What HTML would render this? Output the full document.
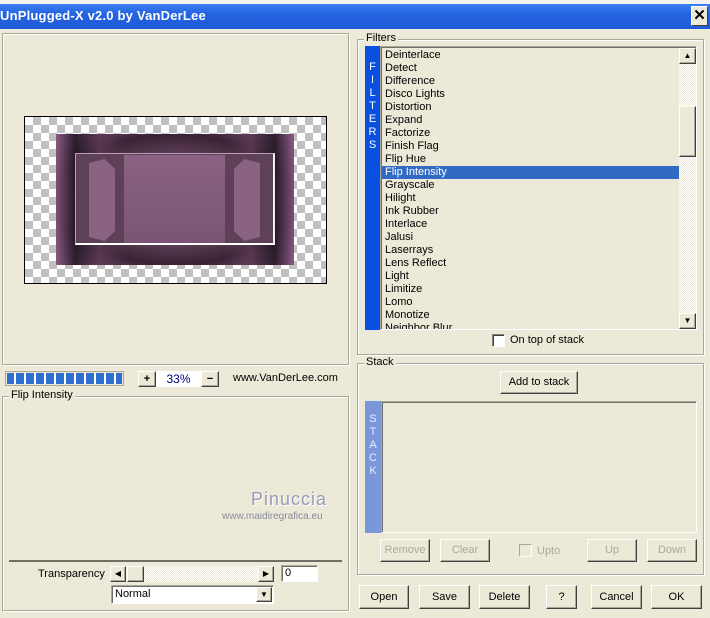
<!DOCTYPE html>
<html><head><style>
*{margin:0;padding:0;box-sizing:border-box}
body{width:710px;height:618px;background:#ece9d8;font-family:"Liberation Sans",sans-serif;font-size:11px;color:#000;position:relative;overflow:hidden}
.a{position:absolute}
.grp{position:absolute;border:1px solid #aca899;box-shadow:inset 1px 1px 0 #fff,1px 1px 0 #fff}
.lbl{position:absolute;background:#ece9d8;padding:0 2px;font-size:11px}
.btn{position:absolute;background:#ece9d8;border:1px solid;border-color:#fff #404040 #404040 #fff;box-shadow:inset -1px -1px 0 #aca899;text-align:center;font-size:11px;line-height:20px}
.dis{color:#aca899}
.sunk{position:absolute;border:1px solid;border-color:#aca899 #fff #fff #aca899;box-shadow:inset 1px 1px 0 #716f64}
.item{height:13px;line-height:13px;padding-left:3px;white-space:nowrap}
.sel{background:#316ac5;color:#fff}
.chk{position:absolute;width:13px;height:13px;background:#fff;border:1px solid;border-color:#808080 #fff #fff #808080;box-shadow:inset 1px 1px 0 #404040}
</style></head><body>
<div class="a" style="left:0;top:0;width:710px;height:4px;background:#f4f3ee"></div>
<div class="a" style="left:0;top:4px;width:710px;height:25px;background:linear-gradient(#3a7ff0,#2563e0 40%,#1f5ad8)"></div>
<div class="a" style="left:0;top:8px;color:#fff;font-weight:bold;font-size:13px;font-family:'Liberation Sans',sans-serif;letter-spacing:0.2px">UnPlugged-X v2.0 by VanDerLee</div>
<div class="a" style="left:691px;top:6px;width:17px;height:20px;background:#ece9d8;border:1px solid;border-color:#fff #404040 #404040 #fff;font-weight:bold;font-size:15px;text-align:center;line-height:18px">✕</div>

<!-- preview -->
<div class="grp" style="left:2px;top:33px;width:347px;height:332px"></div>
<div class="a" style="left:24px;top:116px;width:303px;height:168px;border:1px solid #000;background-color:#fff;background-image:linear-gradient(45deg,#c0c0c0 25%,transparent 25%,transparent 75%,#c0c0c0 75%),linear-gradient(45deg,#c0c0c0 25%,transparent 25%,transparent 75%,#c0c0c0 75%);background-size:16px 16px;background-position:0 0,8px 8px"></div>
<div class="a" style="left:56px;top:134px;width:238px;height:131px;background:radial-gradient(ellipse at center,#7a5670 30%,#3a2234 70%,#8a5a80 100%)"></div>
<div class="a" style="left:56px;top:134px;width:238px;height:131px;background:linear-gradient(90deg,#8e5c86 0%,#1e1420 8%,#5a3a52 18%,transparent 30%,transparent 70%,#5a3a52 82%,#1e1420 92%,#8e5c86 100%);opacity:.8"></div>
<div class="a" style="left:75px;top:153px;width:200px;height:92px;background:#5e4058;border:1px solid #b8a0b4;border-bottom:2px solid #fff;border-right:2px solid #eee"></div>
<div class="a" style="left:124px;top:155px;width:101px;height:88px;background:linear-gradient(#8a6282,#7a5674)"></div>
<div class="a" style="left:89px;top:159px;width:26px;height:82px;background:#8a6282;clip-path:polygon(0 5%,60% 0,100% 12%,100% 88%,60% 100%,0 95%)"></div>
<div class="a" style="left:234px;top:159px;width:26px;height:82px;background:#8a6282;clip-path:polygon(0 12%,40% 0,100% 5%,100% 95%,40% 100%,0 88%)"></div>

<!-- progress / zoom -->
<div class="a" style="left:5px;top:371px;width:119px;height:15px;border:1px solid #aca899;background:repeating-linear-gradient(90deg,#2f6fd0 0 8px,#fff 8px 10px);background-clip:content-box;padding:1px"></div>
<div class="btn" style="left:138px;top:371px;width:18px;height:16px;line-height:14px;font-weight:bold">+</div>
<div class="a" style="left:156px;top:371px;width:45px;height:16px;background:#fff;color:#000080;text-align:center;line-height:16px;font-size:12px">33%</div>
<div class="btn" style="left:201px;top:371px;width:18px;height:16px;line-height:14px;font-weight:bold">−</div>
<div class="a" style="left:233px;top:372px;font-size:11px">www.VanDerLee.com</div>

<!-- Flip Intensity -->
<div class="grp" style="left:2px;top:396px;width:347px;height:215px"></div>
<div class="lbl" style="left:9px;top:389px">Flip Intensity</div>
<div class="a" style="left:251px;top:489px;font-size:18px;color:#9a9ab8;letter-spacing:1px;text-shadow:1px 1px 0 #fff">Pinuccia</div>
<div class="a" style="left:222px;top:511px;font-size:10px;color:#8a8a9a">www.maidiregrafica.eu</div>
<div class="a" style="left:9px;top:560px;width:333px;height:2px;background:#716f64"></div>
<div class="a" style="left:38px;top:568px">Transparency</div>
<div class="a" style="left:110px;top:566px;width:164px;height:16px;background:repeating-conic-gradient(#ece9d8 0 25%,#fff 0 50%) 0 0/2px 2px"></div>
<div class="btn" style="left:110px;top:566px;width:16px;height:16px;font-size:8px;line-height:14px">◀</div>
<div class="btn" style="left:127px;top:566px;width:17px;height:16px"></div>
<div class="btn" style="left:258px;top:566px;width:16px;height:16px;font-size:8px;line-height:14px">▶</div>
<div class="sunk" style="left:281px;top:565px;width:37px;height:17px;background:#fff;padding-left:3px;line-height:15px">0</div>
<div class="sunk" style="left:111px;top:585px;width:163px;height:19px;background:#fff;padding-left:3px;line-height:17px">Normal</div>
<div class="btn" style="left:256px;top:587px;width:16px;height:15px;font-size:8px;line-height:13px">▼</div>

<!-- Filters -->
<div class="grp" style="left:357px;top:39px;width:347px;height:316px"></div>
<div class="lbl" style="left:364px;top:32px">Filters</div>
<div class="a" style="left:365px;top:46px;width:15px;height:284px;background:#0a50e0;color:#fff;font-size:11px;text-align:center;line-height:13px;padding-top:15px">F<br>I<br>L<br>T<br>E<br>R<br>S</div>
<div class="sunk" style="left:380px;top:46px;width:317px;height:284px;box-shadow:inset 1px 1px 0 #716f64"></div>
<div class="a" style="left:382px;top:48px;width:297px;height:281px;overflow:hidden;font-size:11px;padding-top:1px">
<div class="item">Deinterlace</div><div class="item">Detect</div><div class="item">Difference</div><div class="item">Disco Lights</div><div class="item">Distortion</div><div class="item">Expand</div><div class="item">Factorize</div><div class="item">Finish Flag</div><div class="item">Flip Hue</div><div class="item sel">Flip Intensity</div><div class="item">Grayscale</div><div class="item">Hilight</div><div class="item">Ink Rubber</div><div class="item">Interlace</div><div class="item">Jalusi</div><div class="item">Laserrays</div><div class="item">Lens Reflect</div><div class="item">Light</div><div class="item">Limitize</div><div class="item">Lomo</div><div class="item">Monotize</div><div class="item">Neighbor Blur</div></div>
<div class="a" style="left:679px;top:48px;width:17px;height:281px;background:repeating-conic-gradient(#ece9d8 0 25%,#fff 0 50%) 0 0/2px 2px"></div>
<div class="btn" style="left:679px;top:48px;width:17px;height:16px;font-size:8px;line-height:14px">▲</div>
<div class="btn" style="left:679px;top:106px;width:17px;height:51px"></div>
<div class="btn" style="left:679px;top:313px;width:17px;height:16px;font-size:8px;line-height:14px">▼</div>
<div class="chk" style="left:492px;top:334px"></div>
<div class="a" style="left:510px;top:334px">On top of stack</div>

<!-- Stack -->
<div class="grp" style="left:357px;top:363px;width:347px;height:212px"></div>
<div class="lbl" style="left:364px;top:356px">Stack</div>
<div class="btn" style="left:500px;top:371px;width:78px;height:23px">Add to stack</div>
<div class="a" style="left:365px;top:401px;width:16px;height:132px;background:#7b97dc;color:#e8ecff;font-size:11px;text-align:center;line-height:13px;padding-top:12px">S<br>T<br>A<br>C<br>K</div>
<div class="sunk" style="left:381px;top:401px;width:316px;height:132px"></div>
<div class="btn dis" style="left:380px;top:539px;width:50px;height:23px">Remove</div>
<div class="btn dis" style="left:440px;top:539px;width:50px;height:23px">Clear</div>
<div class="chk" style="left:519px;top:544px;background:#ece9d8;box-shadow:none;border-color:#aca899 #fff #fff #aca899"></div>
<div class="a dis" style="left:537px;top:545px">Upto</div>
<div class="btn dis" style="left:587px;top:539px;width:50px;height:23px">Up</div>
<div class="btn dis" style="left:647px;top:539px;width:50px;height:23px">Down</div>

<!-- bottom buttons -->
<div class="btn" style="left:359px;top:585px;width:50px;height:24px;line-height:22px">Open</div>
<div class="btn" style="left:419px;top:585px;width:51px;height:24px;line-height:22px">Save</div>
<div class="btn" style="left:479px;top:585px;width:51px;height:24px;line-height:22px">Delete</div>
<div class="btn" style="left:546px;top:585px;width:31px;height:24px;line-height:22px">?</div>
<div class="btn" style="left:591px;top:585px;width:51px;height:24px;line-height:22px">Cancel</div>
<div class="btn" style="left:651px;top:585px;width:51px;height:24px;line-height:22px">OK</div>
</body></html>
